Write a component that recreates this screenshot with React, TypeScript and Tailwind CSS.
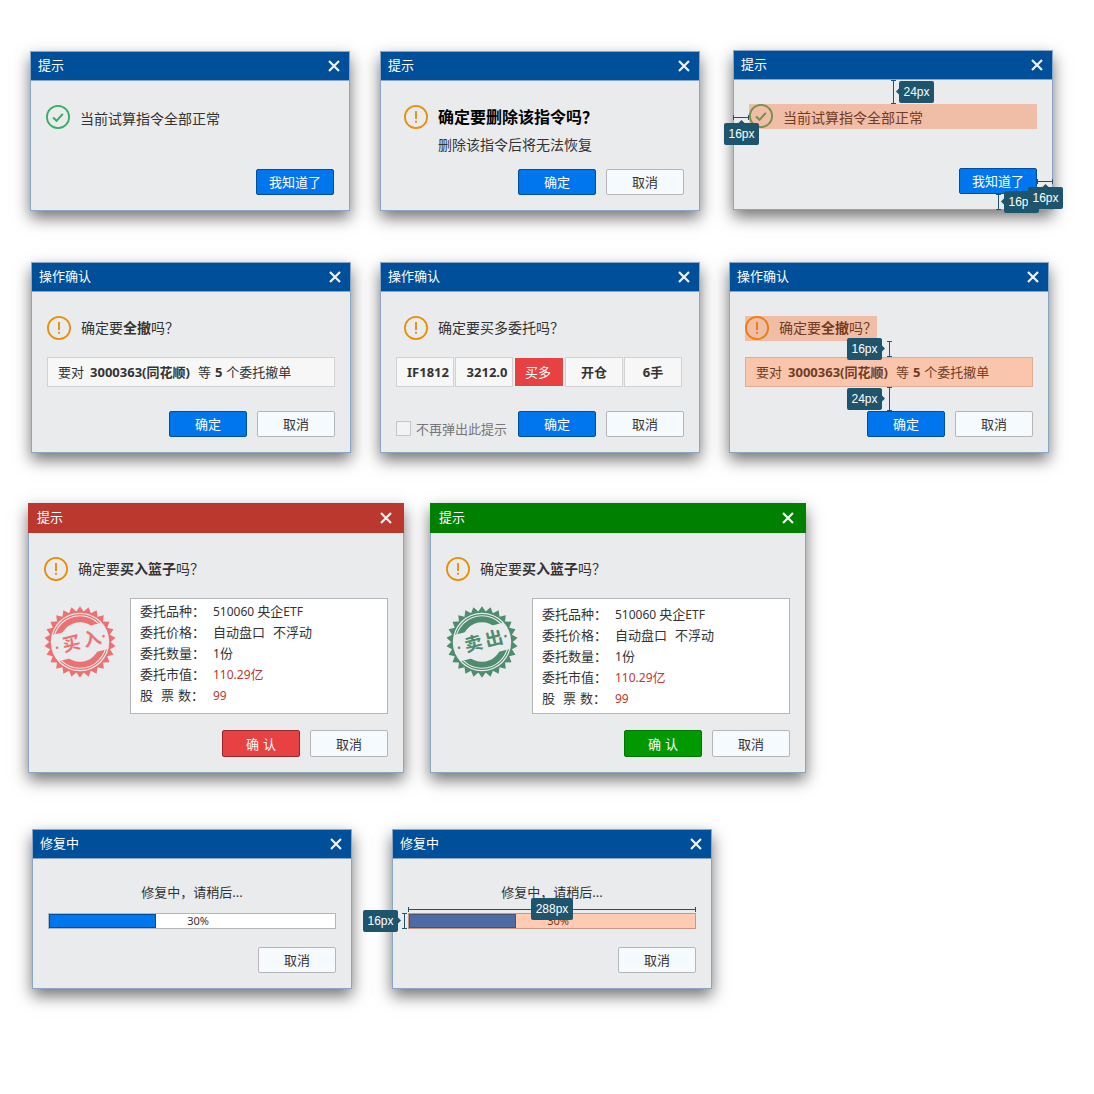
import type { ReactNode } from "react";

type Tone = "blue" | "red" | "green";

const barTone: Record<Tone, string> = {
  blue: "h-[29px] border-b border-[#8ba6c4] bg-[#004f9a] pl-[7px] pr-[9px]",
  red: "-mx-px -mt-px h-[30px] bg-[#bb382f] pl-[9px] pr-3",
  green: "-mx-px -mt-px h-[30px] bg-[#008000] pl-[9px] pr-3",
};

function Dialog({
  title,
  tone = "blue",
  marks,
  children,
}: {
  title: string;
  tone?: Tone;
  marks?: ReactNode;
  children: ReactNode;
}) {
  return (
    <section
      role="dialog"
      aria-label={title}
      className={`relative shrink-0 border border-[#8ba6c4] bg-[#eaebed] shadow-[0_7px_15px_rgba(0,0,0,0.55)] ${
        tone === "blue" ? "w-80" : "w-[376px]"
      }`}
    >
      <header className={`flex items-center justify-between text-white ${barTone[tone]}`}>
        <h2 className="pb-0.5 text-[13px] leading-5">{title}</h2>
        <button type="button" aria-label="关闭" className="block">
          <svg viewBox="0 0 12 12" className="size-3" fill="none" stroke="#f2f2f2" strokeWidth="2.2">
            <path d="M1 1 11 11M11 1 1 11" />
          </svg>
        </button>
      </header>
      <div className="flex flex-col px-[15px] pt-6 pb-[15px]">{children}</div>
      {marks}
    </section>
  );
}

function CheckIcon() {
  return (
    <svg viewBox="0 0 24 24" className="size-6 shrink-0" fill="none" stroke="#38ab68">
      <circle cx="12" cy="12" r="11.1" strokeWidth="1.8" />
      <path d="M7 12.4 10.6 15.8 16.8 8.8" strokeWidth="2" />
    </svg>
  );
}

function WarnIcon() {
  return (
    <svg viewBox="0 0 24 24" className="size-6 shrink-0" fill="none" stroke="#e88f0a">
      <circle cx="12" cy="12" r="11.1" strokeWidth="1.8" />
      <path d="M12 6V14M12 15.8V17.8" strokeWidth="1.9" />
    </svg>
  );
}

function Message({
  icon,
  className = "leading-6",
  children,
}: {
  icon: ReactNode;
  className?: string;
  children: ReactNode;
}) {
  return (
    <div className={`relative flex h-[25px] items-start gap-2.5 text-[14px] ${className}`}>
      {icon}
      <p>{children}</p>
    </div>
  );
}

const buttonTone = {
  plain: "h-[26px] border-[#b4b6b8] bg-[#f5faff] text-[#333]",
  blue: "h-[26px] border-[#004f9a] bg-[#0076ee] text-white",
  plainTall: "h-[27px] border-[#b4b6b8] bg-[#f5faff] text-[#333]",
  red: "h-[27px] border-[#98292a] bg-[#e84143] text-white",
  green: "h-[27px] border-[#007800] bg-[#009900] text-white",
};

function Button({ tone = "plain", children }: { tone?: keyof typeof buttonTone; children: ReactNode }) {
  return (
    <button
      type="button"
      className={`flex w-[78px] items-center justify-center gap-1 rounded-[2px] border text-[13px] leading-5 ${buttonTone[tone]}`}
    >
      {children}
    </button>
  );
}

function Actions({ className = "", children }: { className?: string; children: ReactNode }) {
  return <div className={`flex justify-end gap-2.5 ${className}`}>{children}</div>;
}

/* Translucent tint laid over a measured block. */
function Tint() {
  return <span className="absolute inset-0 bg-[#ff5000]/30" />;
}

const arrowSide = {
  left: "-left-[2px] top-[8px]",
  right: "-right-[2px] top-[8px]",
  top: "-top-[2px] left-[15px]",
  none: "hidden",
};

function Tag({
  arrow,
  className,
  children,
}: {
  arrow: keyof typeof arrowSide;
  className: string;
  children: ReactNode;
}) {
  return (
    <span
      className={`absolute flex h-[22px] items-center justify-center rounded-[2px] bg-[#1f546d] font-['Liberation_Sans',Arial,sans-serif] text-xs text-white ${className}`}
    >
      <i className={`absolute size-[5px] rotate-45 bg-[#1f546d] ${arrowSide[arrow]}`} />
      <span className="relative">{children}</span>
    </span>
  );
}

function VRule({ className }: { className: string }) {
  return (
    <span className={`absolute flex w-[5px] justify-center border-y border-[#1f546d] ${className}`}>
      <i className="w-px bg-[#1f546d]" />
    </span>
  );
}

function HRule({ className }: { className: string }) {
  return (
    <span className={`absolute flex h-[5px] items-center border-x border-[#1f546d] ${className}`}>
      <i className="h-px flex-1 bg-[#1f546d]" />
    </span>
  );
}

const teeth = Array.from({ length: 52 }, (_, i) => {
  const r = i % 2 === 0 ? 35.8 : 30.8;
  const a = (i * Math.PI) / 26 - Math.PI / 2;
  return `${(36 + r * Math.cos(a)).toFixed(2)},${(36 + r * Math.sin(a)).toFixed(2)}`;
}).join(" ");

function Stamp({ chars, color, id }: { chars: [string, string]; color: string; id: string }) {
  return (
    <svg
      viewBox="0 0 72 72"
      className="mt-2 size-[72px] shrink-0"
      role="img"
      aria-label={chars.join("")}
      fill={color}
    >
      <defs>
        <mask id={`${id}-ring`}>
          <rect width="72" height="72" fill="#fff" />
          <circle cx="36" cy="36" r="29.2" fill="#000" />
        </mask>
        <mask id={`${id}-band`}>
          <rect width="72" height="72" fill="#fff" />
          <rect x="0" y="22.5" width="72" height="27" fill="#000" transform="rotate(-14 36 36)" />
        </mask>
      </defs>
      <polygon points={teeth} mask={`url(#${id}-ring)`} />
      <g mask={`url(#${id}-band)`} fill="none" stroke={color}>
        <circle cx="36" cy="36" r="27.4" strokeWidth="1.1" />
        <circle cx="36" cy="36" r="22.7" strokeWidth="6" />
      </g>
      <g transform="rotate(-14 36 36)">
        <circle cx="12.4" cy="36" r="1.3" />
        <circle cx="60.2" cy="36" r="1.3" />
        <text x="27.4" y="42" fontSize="18" fontWeight="700" textAnchor="middle">
          {chars[0]}
        </text>
        <text x="48.4" y="42" fontSize="18" fontWeight="700" textAnchor="middle">
          {chars[1]}
        </text>
      </g>
    </svg>
  );
}

function Revoke({ tinted = false, marks }: { tinted?: boolean; marks?: ReactNode }) {
  return (
    <Dialog title="操作确认" marks={marks}>
      <Message icon={<WarnIcon />} className="self-start leading-6">
        确定要<b>全撤</b>吗？{tinted && <Tint />}
      </Message>
      <div className="relative mt-4 flex h-[30px] items-center border border-[#d2d2d2] bg-[#f7f7f7] pl-2.5 text-[13px] leading-5">
        要对<b className="ml-1.5">3000363(同花顺)</b>
        <span className="ml-2">等</span>
        <b className="mx-1">5</b>个委托撤单
        {tinted && <span className="absolute -inset-px bg-[#ff5000]/30" />}
      </div>
      <Actions className="mt-6">
        <Button tone="blue">确定</Button>
        <Button>取消</Button>
      </Actions>
    </Dialog>
  );
}

const plainCell = "border-[#d2d2d2] bg-[#f7f7f7] font-bold";

const cells = [
  { text: "IF1812", look: `${plainCell} pl-1.5` },
  { text: "3212.0", look: `${plainCell} pl-1.5` },
  { text: "买多", look: "border-[#f3f0f0] bg-[#e84143] pr-0.5 text-white" },
  { text: "开仓", look: plainCell },
  { text: "6手", look: plainCell },
];

function Row({ label, red = false, children }: { label: ReactNode; red?: boolean; children: ReactNode }) {
  return (
    <div className="flex">
      <dt className="flex w-[73px]">{label}</dt>
      <dd className={`flex gap-2 ${red ? "text-[#bb382f]" : ""}`}>{children}</dd>
    </div>
  );
}

function Basket({
  tone,
  chars,
  stampColor,
  pad,
}: {
  tone: "red" | "green";
  chars: [string, string];
  stampColor: string;
  pad: string;
}) {
  return (
    <Dialog title="提示" tone={tone}>
      <Message icon={<WarnIcon />}>
        确定要<b>买入篮子</b>吗？
      </Message>
      <div className="mt-4 flex gap-3.5">
        <Stamp chars={chars} color={stampColor} id={tone} />
        <dl
          className={`h-[116px] flex-1 border border-[#b4b6b8] bg-white pl-[9px] text-[13px] leading-[21px] ${pad}`}
        >
          <Row label="委托品种：">
            <span>
              <span className="text-xs">510060 </span>央企<span className="text-xs">ETF</span>
            </span>
          </Row>
          <Row label="委托价格：">
            <span>自动盘口</span>
            <span>不浮动</span>
          </Row>
          <Row label="委托数量：">
            <span>
              <span className="text-xs">1</span>份
            </span>
          </Row>
          <Row label="委托市值：" red>
            <span>
              <span className="text-xs">110.29</span>亿
            </span>
          </Row>
          <Row
            red
            label={
              <>
                股<span className="mr-1 ml-2">票</span>数：
              </>
            }
          >
            <span className="text-xs leading-[21px]">99</span>
          </Row>
        </dl>
      </div>
      <Actions className="mt-4">
        <Button tone={tone}>
          <span>确</span>
          <span>认</span>
        </Button>
        <Button tone="plainTall">取消</Button>
      </Actions>
    </Dialog>
  );
}

function Repair({ tinted = false, marks }: { tinted?: boolean; marks?: ReactNode }) {
  return (
    <Dialog title="修复中" marks={marks}>
      <p className="text-center text-[13px] leading-[18px]">修复中，请稍后...</p>
      <div
        role="progressbar"
        aria-label="修复进度"
        aria-valuenow={30}
        className="relative mt-3 h-4 border border-[#b4b6b8] bg-white"
      >
        <div className="h-full w-[107px] border border-[#004f9a] bg-[#0076ee]" />
        <span className="absolute inset-0 flex items-center justify-center pl-3 text-[11px]">30%</span>
        {tinted && <span className="absolute -inset-px bg-[#ff5000]/30" />}
      </div>
      <Actions className="mt-[18px]">
        <Button>取消</Button>
      </Actions>
    </Dialog>
  );
}

function Known({ tinted = false, marks }: { tinted?: boolean; marks?: ReactNode }) {
  return (
    <Dialog title="提示" marks={marks}>
      <Message icon={<CheckIcon />} className="leading-7">
        当前试算指令全部正常{tinted && <Tint />}
      </Message>
      <Actions className="mt-[39px]">
        <Button tone="blue">我知道了</Button>
      </Actions>
    </Dialog>
  );
}

export default function App() {
  return (
    <main
      lang="zh-CN"
      className="min-h-screen bg-white pt-[50px] pb-10 font-['Noto_Sans','Noto_Sans_CJK_SC',sans-serif] text-[#333]"
    >
      <div className="flex flex-wrap items-start gap-[33px] pl-[30px]">
        <div className="flex flex-wrap gap-[30px] pt-px">
          <Known />
          <Dialog title="提示">
            <div className="flex gap-2.5 pl-2">
              <WarnIcon />
              <div>
                <p className="text-base leading-[25px] font-bold text-black">确定要删除该指令吗？</p>
                <p className="mt-1 text-sm leading-[22px]">删除该指令后将无法恢复</p>
              </div>
            </div>
            <Actions className="mt-[13px]">
              <Button tone="blue">确定</Button>
              <Button>取消</Button>
            </Actions>
          </Dialog>
        </div>
        <Known
          tinted
          marks={
            <>
              <VRule className="top-[29px] left-[157px] h-6" />
              <Tag arrow="left" className="top-[30px] left-[165px] w-[35px]">24px</Tag>
              <HRule className="top-[64px] -left-px w-4" />
              <Tag arrow="top" className="top-[72px] -left-[10px] w-[35px]">16px</Tag>
              <VRule className="top-[143px] left-[262px] h-4" />
              <Tag arrow="left" className="top-[140px] left-[270px] w-[35px]">16px</Tag>
              <HRule className="top-[128px] left-[303px] w-4" />
              <Tag arrow="top" className="top-[136px] left-[294px] w-[35px]">16px</Tag>
            </>
          }
        />
      </div>

      <div className="mt-[51px] flex flex-wrap items-start gap-[29px] pl-[31px]">
        <Revoke />
        <Dialog title="操作确认">
          <Message icon={<WarnIcon />} className="pl-2 leading-6">
            确定要买多委托吗？
          </Message>
          <ul className="mt-4 grid grid-cols-[1fr_1fr_50px_1fr_1fr] gap-px pr-0.5 text-[13px] leading-5">
            {cells.map((cell) => (
              <li key={cell.text} className={`flex h-[30px] items-center justify-center border ${cell.look}`}>
                {cell.text}
              </li>
            ))}
          </ul>
          <div className="mt-6 flex items-end justify-between">
            <label className="mb-px flex h-[15px] items-center gap-[5px] text-[13px] leading-5 text-[#777]">
              <input
                type="checkbox"
                className="size-[15px] appearance-none border border-[#c6c6c6] bg-[#f3f3f3] checked:bg-[#0076ee]"
              />
              不再弹出此提示
            </label>
            <Actions>
              <Button tone="blue">确定</Button>
              <Button>取消</Button>
            </Actions>
          </div>
        </Dialog>
        <Revoke
          tinted
          marks={
            <>
              <VRule className="top-[78px] left-[157px] h-4" />
              <Tag arrow="right" className="top-[75px] left-[117px] w-[35px]">16px</Tag>
              <VRule className="top-[124px] left-[157px] h-6" />
              <Tag arrow="right" className="top-[125px] left-[117px] w-[35px]">24px</Tag>
            </>
          }
        />
      </div>

      <div className="mt-[50px] flex flex-wrap items-start gap-[26px] pl-7">
        <Basket tone="red" chars={["买", "入"]} stampColor="#ec7172" pad="pt-0.5" />
        <Basket tone="green" chars={["卖", "出"]} stampColor="#4d8c6c" pad="pt-[5px]" />
      </div>

      <div className="mt-14 flex flex-wrap items-start gap-10 pl-8">
        <Repair />
        <Repair
          tinted
          marks={
            <>
              <HRule className="top-[77px] left-[15px] w-72" />
              <Tag arrow="none" className="top-[68px] left-[138px] w-[42px]">288px</Tag>
              <VRule className="top-[83px] left-[9px] h-4" />
              <Tag arrow="right" className="top-[80px] -left-[30px] w-[35px]">16px</Tag>
            </>
          }
        />
      </div>
    </main>
  );
}
